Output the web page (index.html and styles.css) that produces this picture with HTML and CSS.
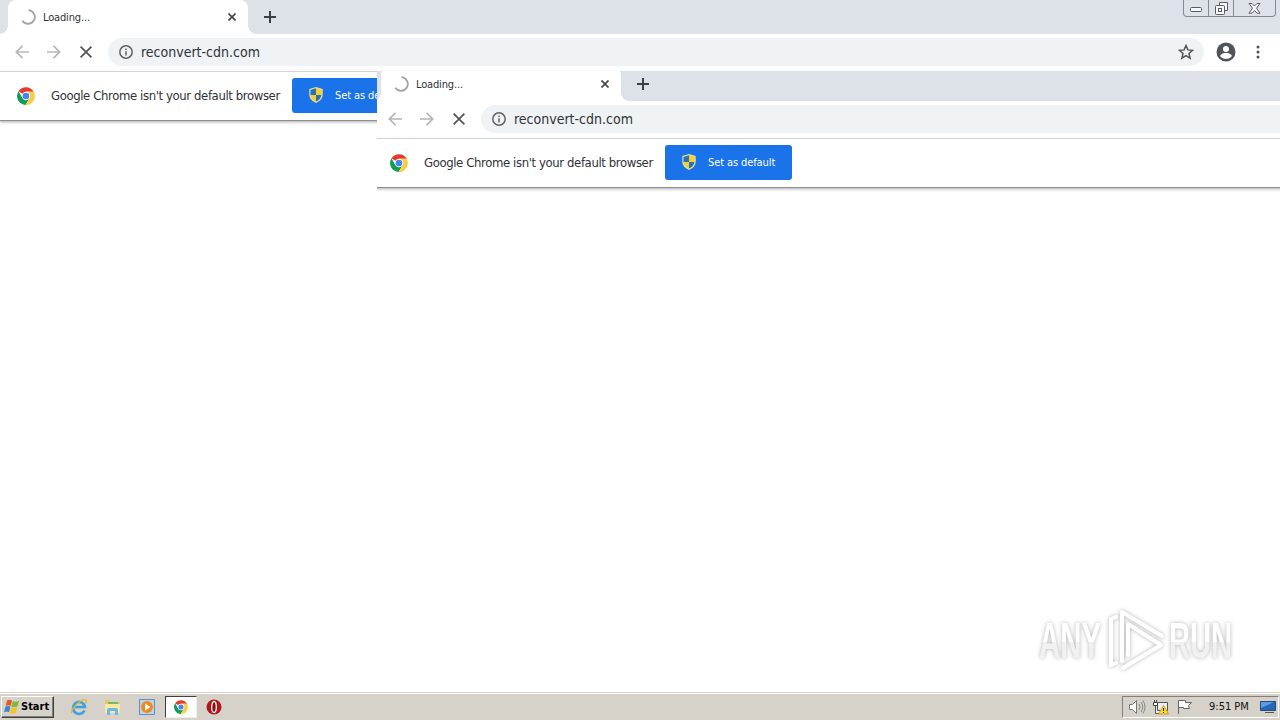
FILE: index.html
```html
<!DOCTYPE html>
<html lang="en">
<head>
  <meta charset="UTF-8" />
  <title>Loading...</title>
  <link rel="stylesheet" href="styles.css">
</head>
<body>

  <!-- shared icons -->
  <svg class="sprite" aria-hidden="true">
    <symbol id="i-spin" viewBox="0 0 16 16"><path d="M8.5 1.2A6.8 6.8 0 1 1 2.3 11.7" /></symbol>
    <symbol id="i-close" viewBox="0 0 8 8"><path d="M.5.5l7 7M7.5.5l-7 7" /></symbol>
    <symbol id="i-plus" viewBox="0 0 12 12"><path d="M6 0v12M0 6h12" /></symbol>
    <symbol id="i-back" viewBox="0 0 14 14"><path d="M14 7H1.5M7.5.8L1.3 7l6.2 6.2" /></symbol>
    <symbol id="i-fwd" viewBox="0 0 14 14"><path d="M0 7h12.5M6.5.8L12.7 7l-6.2 6.2" /></symbol>
    <symbol id="i-stop" viewBox="0 0 12 12"><path d="M.6.6l10.8 10.8M11.4.6L.6 11.4" /></symbol>
    <symbol id="i-info" viewBox="0 0 14 14"><circle cx="7" cy="7" r="6.2" /><path d="M7 6.2v4.3M7 3.5v1.6" /></symbol>
    <symbol id="i-chrome" viewBox="0 0 18 18">
      <path fill="#e33b2e" d="M9 9L1.4 4.3A9 9 0 0 1 16.8 4.8H9z" />
      <path fill="#109d58" d="M9 9l-3.6 2.1-4-6.8A9 9 0 0 0 8.6 18l4-6.9z" />
      <path fill="#fdcd40" d="M9 4.8h7.8A9 9 0 0 1 8.6 18l4-6.9z" />
      <circle cx="9" cy="9" r="4.2" fill="#fff" />
      <circle cx="9" cy="9" r="3.3" fill="#4485f4" />
    </symbol>
    <symbol id="i-shield" viewBox="0 0 14 16">
      <path fill="#e9d9a0" d="M7 0l6.700 2v5.500c0 4-3 7-6.700 8.500C3.300 14.500.3 11.500.3 7.500V2z" />
      <path fill="#2873b8" d="M7 1.300V8H1.500V3zM7 8h5.400c-.3 3-2.600 5.300-5.400 6.600z" />
      <path fill="#f9cf2c" d="M7 1.300V8h5.500V3zM7 8H1.600c.3 3 2.600 5.300 5.400 6.600z" />
    </symbol>
  </svg>

  <main class="desktop">
    <section class="window window-back">
      <div class="tabstrip">
        <div class="tab">
          <svg class="spin"><use href="#i-spin" /></svg>
          <span class="tab-title">Loading...</span>
          <svg class="tab-close"><use href="#i-close" /></svg>
        </div>
        <svg class="new-tab"><use href="#i-plus" /></svg>
        <div class="controls">
          <span><svg width="12" height="6" viewBox="0 0 12 6"><rect x=".5" y=".5" width="11" height="4" rx="1" /></svg></span>
          <span><svg width="13" height="13" viewBox="0 0 13 13"><path d="M4.500 3.500v-3h8v8h-3" /><rect x=".5" y="3.500" width="9" height="9" rx="1" /><rect x="3.500" y="6.500" width="3" height="3" /></svg></span>
          <span><svg width="13" height="11" viewBox="0 0 13 11"><path d="M1 .5h3l2.500 2.500L9 .5h3L8.500 5.200l3.500 5H9L6.500 7.500 4 10.200H1l3.500-5z" /></svg></span>
        </div>
      </div>
      <div class="toolbar">
        <svg class="nav dim"><use href="#i-back" /></svg>
        <svg class="nav dim"><use href="#i-fwd" /></svg>
        <svg class="nav stop"><use href="#i-stop" /></svg>
        <div class="omnibox">
          <svg class="info"><use href="#i-info" /></svg>
          <span class="url">reconvert-cdn.com</span>
          <svg class="star" viewBox="0 0 16 16"><path d="M8 1.500l1.900 4.400 4.700.4-3.600 3.100 1.100 4.700L8 11.600l-4.100 2.500L5 9.400 1.400 6.300l4.700-.4z" /></svg>
        </div>
        <svg class="avatar" viewBox="0 0 20 20"><circle cx="10" cy="10" r="9.500" fill="#50545a" /><circle cx="10" cy="7" r="3" fill="#fff" /><path fill="#fff" d="M4 14c1-2.500 4-3 6-3s5 .5 6 3c-3 3.800-9 3.800-12 0z" /></svg>
        <svg class="dots" viewBox="0 0 4 14"><circle cx="2" cy="2" r="1.500" /><circle cx="2" cy="7" r="1.500" /><circle cx="2" cy="12" r="1.500" /></svg>
      </div>
      <div class="infobar">
        <svg class="chrome"><use href="#i-chrome" /></svg>
        <span class="notice">Google Chrome isn't your default browser</span>
        <button class="set-default"><svg class="shield"><use href="#i-shield" /></svg><span>Set as default</span></button>
      </div>
    </section>

    <div class="front-clip">
      <section class="window window-front">
        <div class="tabstrip">
          <div class="tab">
            <svg class="spin"><use href="#i-spin" /></svg>
            <span class="tab-title">Loading...</span>
            <svg class="tab-close"><use href="#i-close" /></svg>
          </div>
          <svg class="new-tab"><use href="#i-plus" /></svg>
        </div>
        <div class="toolbar">
          <svg class="nav dim"><use href="#i-back" /></svg>
          <svg class="nav dim"><use href="#i-fwd" /></svg>
          <svg class="nav stop"><use href="#i-stop" /></svg>
          <div class="omnibox">
            <svg class="info"><use href="#i-info" /></svg>
            <span class="url">reconvert-cdn.com</span>
          </div>
        </div>
        <div class="infobar">
          <svg class="chrome"><use href="#i-chrome" /></svg>
          <span class="notice">Google Chrome isn't your default browser</span>
          <button class="set-default"><svg class="shield"><use href="#i-shield" /></svg><span>Set as default</span></button>
        </div>
      </section>
    </div>

    <svg class="watermark" width="200" height="70" viewBox="0 0 200 70">
      <defs>
        <linearGradient id="fade" gradientUnits="userSpaceOnUse" x1="0" y1="16" x2="0" y2="54">
          <stop offset=".55" stop-color="#fff" />
          <stop offset=".56" stop-color="#f1f1f1" />
        </linearGradient>
      </defs>
      <text x="2" y="53" textLength="62" lengthAdjust="spacingAndGlyphs">ANY</text>
      <text x="132" y="53" textLength="63" lengthAdjust="spacingAndGlyphs">RUN</text>
      <g class="mark">
        <path d="M79 12L74 14V60L79 58" />
        <path d="M85 56V7L125 31" />
        <path d="M91 50V19L124 40L86 63" />
      </g>
    </svg>
  </main>

  <footer class="taskbar">
    <button class="start">
      <svg width="16" height="16" viewBox="0 0 16 16">
        <path fill="#e8562a" d="M3 1.500c2-1.300 3.500-1 5 0L6.700 7c-1.500-1-3-1-5 0z" />
        <path fill="#7dba3c" d="M8.700 2c2 1 4 1 6.500-.5L13.500 7.300c-2 1.200-4 1.200-6 .2z" />
        <path fill="#3b84d0" d="M1.400 7.800c2-1 3.500-1 5 0l-1.400 5.500c-1.500-1-3-1-5 0z" />
        <path fill="#f8c22d" d="M7.300 8.300c2 1 4 1 6-.2l-1.600 5.700c-2 1.200-4 1.200-6 .2z" />
      </svg>
      <span>Start</span>
    </button>
    <div class="launch">
      <svg width="18" height="18" viewBox="0 0 18 18"><path d="M14.500 12.500A6 6 0 1 1 15 9H5" fill="none" stroke="#3ba3e0" stroke-width="2.600" /><path d="M2 15C-1 12 12 0 16 2c1 .6.500 2-.5 3.500" fill="none" stroke="#e7b62e" stroke-width="1.300" /></svg>
      <svg width="18" height="18" viewBox="0 0 18 18"><path d="M1 2h5l1 2h9v11H1z" fill="#e9ca68" /><path d="M4 4h10v4H4z" fill="#76b868" /><path d="M1 6h15v9H1z" fill="#f7e7a1" /><path d="M3 17v-5q0-2 2-2h7q2 0 2 2v5h-3v-4H6v4z" fill="#6db9e4" /></svg>
      <svg width="18" height="18" viewBox="0 0 18 18"><path d="M1.500 1.500h15v15h-15z" fill="#b9d5ef" stroke="#5b8fc7" /><circle cx="9" cy="9" r="6" fill="#f08a1d" /><path d="M7 5.500v7l5.500-3.500z" fill="#fff" /></svg>
    </div>
    <div class="task-active"><svg width="14" height="14"><use href="#i-chrome" /></svg></div>
    <svg class="opera" width="16" height="16" viewBox="0 0 16 16"><circle cx="8" cy="8" r="7.500" fill="#b3151b" /><ellipse cx="8" cy="8" rx="2.300" ry="5.500" fill="#851015" stroke="#fff" stroke-width="1.300" /></svg>
    <div class="tray">
      <svg width="18" height="16" viewBox="0 0 18 16"><path d="M1.500 5.500h3l4-4v13l-4-4h-3z" fill="#fff" stroke="#777" /><path d="M11 5q2 3 0 6M13 3q3.500 5 0 10M15 1.500q4 6.500 0 13" fill="none" stroke="#888" /></svg>
      <svg width="18" height="16" viewBox="0 0 18 16"><path d="M5.500 3.500h10v8h-10zM3.500 7v7.500h8" fill="#eee" stroke="#555" /><path d="M1.500 3.500h4v3h-4zM2.500 1v2M4.500 1v2" fill="#fff" stroke="#444" /><path d="M11.500 6.500l5 8.500h-10z" fill="#ffda2c" stroke="#b78a00" stroke-width=".7" /><path d="M11.500 9v3M11.500 13v1" stroke="#222" /></svg>
      <svg width="18" height="16" viewBox="0 0 18 16"><path d="M2.500 15V1.500h7v2h6l-3 3 1 3h-6v-1h-5" fill="#fff" stroke="#666" /></svg>
      <time>9:51 PM</time>
      <svg class="show-desktop" width="16" height="14" viewBox="0 0 16 14"><path d="M.5 1.500h15v9H.5z" fill="#2468b8" stroke="#284774" /><path d="M1 2h13L1 8z" fill="#5a9de0" /><path d="M5 12.500h9" stroke="#555" /></svg>
    </div>
  </footer>

</body>
</html>
```

FILE: styles.css
```css
* {
  box-sizing: border-box;
}

body {
  margin: 0;
  width: 1280px;
  height: 720px;
  overflow: hidden;
  display: flex;
  flex-direction: column;
  background: #fff;
  color: #303236;
  font-family: Tahoma, "DejaVu Sans Condensed", "DejaVu Sans", sans-serif;
}

svg {
  display: block;
  flex: none;
}

.sprite {
  position: absolute;
  width: 0;
  height: 0;
}

.desktop {
  position: relative;
  flex: 1;
  overflow: hidden;
}

.window {
  width: 1280px;
  height: 692px;
  background: #fff;
}

/* the second window lies over the first one, its frame edge is cut off */
.front-clip {
  position: absolute;
  left: 377px;
  top: 71px;
  right: 0;
  bottom: 0;
  overflow: hidden;
}

.window-front {
  margin: -4px 0 0 -4px;
}

.tabstrip {
  display: flex;
  height: 34px;
  padding-left: 8px;
  background: #dde1e8;
}

.tab {
  position: relative;
  display: flex;
  align-items: center;
  width: 240px;
  padding: 0 12px;
  background: #fff;
  border-radius: 8px 8px 0 0;
}

.tab::before,
.tab::after {
  content: "";
  position: absolute;
  bottom: 0;
  width: 8px;
  height: 8px;
}

.tab::before {
  left: -8px;
  background: radial-gradient(circle at 0 0, transparent 7.5px, #fff 8px);
}

.tab::after {
  right: -8px;
  background: radial-gradient(circle at 100% 0, transparent 7.5px, #fff 8px);
}

.spin {
  width: 16px;
  height: 16px;
  fill: none;
  stroke: #a2a4a7;
  stroke-width: 1.8;
}

.tab-title {
  margin-left: 7px;
  flex: 1;
  font-size: 11px;
  letter-spacing: -.15px;
}

.tab-close {
  width: 8px;
  height: 8px;
  stroke: #45484d;
  stroke-width: 1.7;
}

.new-tab {
  width: 12px;
  height: 12px;
  margin: 11px 0 0 16px;
  stroke: #3c4043;
  stroke-width: 2;
}

.controls {
  display: flex;
  width: 93px;
  height: 17px;
  margin: 0 4px 0 auto;
  border: 1px solid #858a92;
  border-top: 0;
  border-radius: 0 0 4px 4px;
}

.controls span {
  display: flex;
  align-items: center;
  justify-content: center;
  width: 25px;
  border-right: 1px solid #858a92;
}

.controls span:first-child {
  padding-top: 4px;
}

.controls span:last-child {
  width: 41px;
  border: 0;
}

.controls svg {
  fill: #f5f6f8;
  stroke: #575b63;
}

.toolbar {
  display: flex;
  align-items: center;
  height: 38px;
  padding: 0 20px 1px 15px;
  border-bottom: 1px solid #dadce0;
}

.nav {
  width: 14px;
  height: 14px;
  margin-right: 18px;
  fill: none;
  stroke: #505357;
  stroke-width: 1.7;
}

.dim {
  stroke: #b5b6b9;
}

.stop {
  width: 12px;
  height: 12px;
  margin: 0 16px 0 1px;
}

.omnibox {
  display: flex;
  align-items: center;
  flex: 1;
  height: 28px;
  padding: 0 10px 0 11px;
  background: #f0f3f5;
  border-radius: 14px;
}

.info {
  width: 14px;
  height: 14px;
  margin-right: 8px;
  fill: none;
  stroke: #5f6368;
  stroke-width: 1.5;
}

.url {
  flex: 1;
  font-size: 14px;
}

.star {
  width: 16px;
  height: 16px;
  fill: none;
  stroke: #505357;
  stroke-width: 1.5;
}

.avatar {
  width: 20px;
  height: 20px;
  margin: 0 20px 0 12px;
}

.dots {
  width: 4px;
  height: 14px;
  fill: #505357;
}

.infobar {
  display: flex;
  align-items: center;
  height: 49px;
  padding: 0 0 2px 17px;
  border-bottom: 1px solid #8e8e8e;
  box-shadow: 0 1px 3px #aaa;
}

.chrome {
  width: 18px;
  height: 18px;
  margin-top: 2px;
}

.notice {
  width: 228px;
  margin: 0 13px 0 16px;
  white-space: nowrap;
  font-size: 13px;
  letter-spacing: -.39px;
}

.set-default {
  display: flex;
  align-items: center;
  width: 127px;
  height: 35px;
  padding: 0 0 0 17px;
  border: 0;
  border-radius: 3px;
  background: #1a73e8;
  color: #fff;
  font: inherit;
  font-size: 11px;
  letter-spacing: -.1px;
  white-space: nowrap;
}

.shield {
  width: 14px;
  height: 16px;
  margin-right: 12px;
}

.watermark {
  position: absolute;
  left: 1037px;
  top: 605px;
  filter: drop-shadow(0 0 2px #b4b4b4);
}

.watermark text {
  fill: url(#fade);
  font: bold 50px "Liberation Sans", sans-serif;
}

.mark {
  fill: none;
  stroke: #fff;
  stroke-width: 4;
  stroke-linejoin: round;
  stroke-linecap: round;
}

.taskbar {
  display: flex;
  align-items: center;
  height: 28px;
  padding: 1px 1px 1px;
  background: #d6d1c9;
  border-top: 1px solid #d6d1c9;
  box-shadow: inset 0 1px #fff;
}

.start {
  display: flex;
  align-items: center;
  gap: 1px;
  width: 53px;
  height: 22px;
  padding: 0 2px;
  border: 1px solid;
  border-color: #fff #404040 #404040 #fff;
  box-shadow: inset -1px -1px #848078;
  background: #d6d1c9;
  color: #000;
  font: bold 11px "DejaVu Sans Condensed", sans-serif;
}

.launch {
  display: flex;
  gap: 16px;
  margin-left: 16px;
}

.task-active {
  display: flex;
  align-items: center;
  justify-content: center;
  width: 32px;
  height: 22px;
  margin: 0 9px;
  background: #fff;
  border: 1px solid;
  border-color: #404040 #eee #eee #404040;
}

.tray {
  display: flex;
  align-items: center;
  width: 157px;
  height: 22px;
  margin-left: auto;
  padding-left: 5px;
  gap: 6px;
  border: 1px solid;
  border-color: #848078 #fff #fff #848078;
  color: #111;
  font-size: 11px;
}

.tray time {
  width: 45px;
  margin-left: 9px;
  white-space: nowrap;
}
```
